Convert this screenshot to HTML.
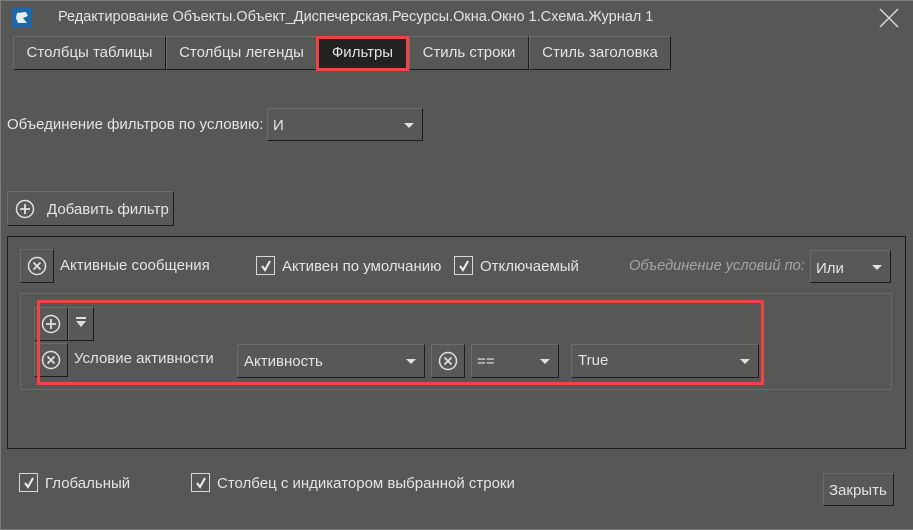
<!DOCTYPE html>
<html><head><meta charset="utf-8"><style>
*{box-sizing:border-box;margin:0;padding:0}
body{width:913px;height:528px;background:#575755;font-family:"Liberation Sans",sans-serif;font-size:15px;color:#e4e4e4;position:relative;overflow:hidden}
body:after{content:"";position:absolute;left:0;top:0;width:913px;height:528px;border:1px solid #7c7c7a;pointer-events:none}
.a{position:absolute;white-space:nowrap}
.btn{position:absolute;background:#585856;border-top:1px solid #6c6c6a;border-left:1px solid #6c6c6a;border-right:1px solid #1c1c1c;border-bottom:1px solid #1c1c1c}
.tab{position:absolute;top:36px;height:34px;border-top:1px solid #6c6c6a;border-left:1px solid #6c6c6a;border-right:1px solid #1c1c1c;border-bottom:1px solid #1c1c1c;text-align:center;line-height:31px}
.cb{position:absolute;width:19px;height:19px;border:1px solid #d8d8d8}
.cb svg{position:absolute;left:2px;top:2px}
.arr{position:absolute;right:8px;top:50%;margin-top:-2px;width:0;height:0;border-left:5px solid transparent;border-right:5px solid transparent;border-top:5px solid #e0e0e0}
.red{position:absolute;border:3px solid #f04345}
</style></head><body>
<div class="a" style="left:12px;top:8px;width:20px;height:20px;background:#1f67a8"><svg width="20" height="20"><path d="M5 5 L14 4 L16 8 L11 10 L15 15 L6 15 L4 10 Z" fill="#e8eef5"/></svg></div>
<div class="a" style="left:58px;top:9px;font-size:14.5px">Редактирование Объекты.Объект_Диспечерская.Ресурсы.Окна.Окно 1.Схема.Журнал 1</div>
<svg class="a" style="left:879px;top:8px" width="20" height="20"><path d="M1 1L19 19M19 1L1 19" stroke="#d8d8d8" stroke-width="1.5"/></svg>

<div class="tab" style="left:13px;width:153px">Столбцы таблицы</div>
<div class="tab" style="left:166px;width:151px">Столбцы легенды</div>
<div class="tab" style="left:317px;width:91px;background:#222">Фильтры</div>
<div class="red" style="left:316px;top:36px;width:93px;height:35px"></div>
<div class="tab" style="left:409px;width:120px">Стиль строки</div>
<div class="tab" style="left:529px;width:142px">Стиль заголовка</div>

<div class="a" style="left:7px;top:116px">Объединение фильтров по условию:</div>
<div class="btn" style="left:267px;top:108px;width:156px;height:33px"><span class="a" style="left:5px;top:8px">И</span><div class="arr"></div></div>

<div class="btn" style="left:7px;top:191px;width:167px;height:35px">
<svg class="a" style="left:7px;top:7px" width="20" height="20"><circle cx="10" cy="10" r="8.5" fill="none" stroke="#e0e0e0" stroke-width="1.5"/><path d="M10 5V15M5 10H15" stroke="#e0e0e0" stroke-width="1.8"/></svg>
<span class="a" style="left:39px;top:9px">Добавить фильтр</span></div>

<div class="a" style="left:7px;top:236px;width:899px;height:213px;border:1px solid #1a1a1a"></div>
<div class="btn" style="left:20px;top:249px;width:34px;height:34px"><svg class="a" style="left:6px;top:6px" width="20" height="20"><circle cx="10" cy="10" r="8.5" fill="none" stroke="#e0e0e0" stroke-width="1.5"/><path d="M6.5 6.5L13.5 13.5M13.5 6.5L6.5 13.5" stroke="#e0e0e0" stroke-width="1.8"/></svg></div>
<div class="a" style="left:60px;top:257px">Активные сообщения</div>
<div class="cb" style="left:256px;top:256px"><svg width="14" height="14"><path d="M3 7L6 11L11 2" fill="none" stroke="#eee" stroke-width="2"/></svg></div>
<div class="a" style="left:282px;top:258px">Активен по умолчанию</div>
<div class="cb" style="left:454px;top:256px"><svg width="14" height="14"><path d="M3 7L6 11L11 2" fill="none" stroke="#eee" stroke-width="2"/></svg></div>
<div class="a" style="left:480px;top:258px">Отключаемый</div>
<div class="a" style="left:629px;top:258px;color:#a4a4a2;font-style:italic;font-size:14.6px">Объединение условий по:</div>
<div class="btn" style="left:810px;top:250px;width:81px;height:33px"><span class="a" style="left:5px;top:9px">Или</span><div class="arr"></div></div>

<div class="a" style="left:20px;top:293px;width:872px;height:97px;border:1px solid #6a6a68"></div>
<div class="btn" style="left:34px;top:307px;width:34px;height:34px"><svg class="a" style="left:6px;top:6px" width="20" height="20"><circle cx="10" cy="10" r="8.5" fill="none" stroke="#e0e0e0" stroke-width="1.5"/><path d="M10 5V15M5 10H15" stroke="#e0e0e0" stroke-width="1.8"/></svg></div>
<div class="btn" style="left:68px;top:307px;width:26px;height:34px"><svg class="a" style="left:6px;top:9px" width="12" height="12"><path d="M1 1H11" stroke="#e0e0e0" stroke-width="2"/><path d="M1 4H11L6 10Z" fill="#e0e0e0"/></svg></div>
<div class="btn" style="left:34px;top:343px;width:34px;height:34px"><svg class="a" style="left:6px;top:6px" width="20" height="20"><circle cx="10" cy="10" r="8.5" fill="none" stroke="#e0e0e0" stroke-width="1.5"/><path d="M6.5 6.5L13.5 13.5M13.5 6.5L6.5 13.5" stroke="#e0e0e0" stroke-width="1.8"/></svg></div>
<div class="a" style="left:74px;top:350px">Условие активности</div>
<div class="btn" style="left:237px;top:344px;width:188px;height:34px"><span class="a" style="left:6px;top:8px">Активность</span><div class="arr"></div></div>
<div class="btn" style="left:431px;top:344px;width:34px;height:34px"><svg class="a" style="left:6px;top:6px" width="20" height="20"><circle cx="10" cy="10" r="8.5" fill="none" stroke="#e0e0e0" stroke-width="1.5"/><path d="M6.5 6.5L13.5 13.5M13.5 6.5L6.5 13.5" stroke="#e0e0e0" stroke-width="1.8"/></svg></div>
<div class="btn" style="left:471px;top:344px;width:88px;height:34px"><span class="a" style="left:5px;top:8px">==</span><div class="arr"></div></div>
<div class="btn" style="left:571px;top:344px;width:188px;height:34px"><span class="a" style="left:6px;top:7px">True</span><div class="arr"></div></div>
<div class="red" style="left:37px;top:300px;width:727px;height:85px"></div>

<div class="cb" style="left:19px;top:473px"><svg width="14" height="14"><path d="M3 7L6 11L11 2" fill="none" stroke="#eee" stroke-width="2"/></svg></div>
<div class="a" style="left:45px;top:475px">Глобальный</div>
<div class="cb" style="left:191px;top:473px"><svg width="14" height="14"><path d="M3 7L6 11L11 2" fill="none" stroke="#eee" stroke-width="2"/></svg></div>
<div class="a" style="left:217px;top:475px">Столбец с индикатором выбранной строки</div>
<div class="btn" style="left:823px;top:473px;width:71px;height:33px"><span class="a" style="left:5px;top:8px">Закрыть</span></div>
</body></html>
